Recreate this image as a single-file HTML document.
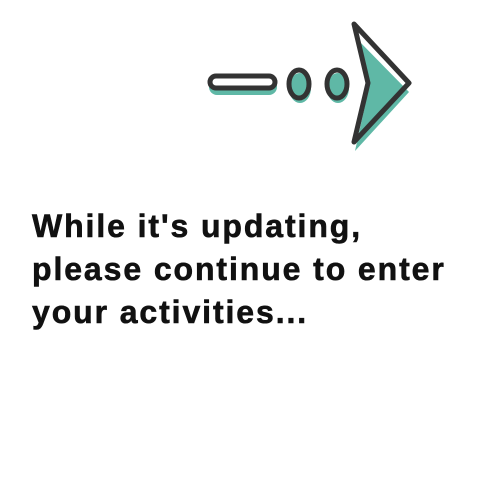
<!DOCTYPE html>
<html><head><style>
html,body{margin:0;padding:0;background:#fff;width:500px;height:500px;overflow:hidden}
.t{position:absolute;left:32px;top:205px;font-family:"Liberation Sans",sans-serif;font-weight:bold;font-size:32px;line-height:43px;color:#111;letter-spacing:1.9px;white-space:nowrap;-webkit-text-stroke:0.6px #111}
svg{position:absolute;left:0;top:0}
</style></head><body>
<svg width="500" height="500">
<g fill="#5fb8a6">
<rect x="209" y="79" width="68" height="16" rx="8"/>
<ellipse cx="300" cy="88" rx="11" ry="15"/>
<ellipse cx="338" cy="88" rx="11" ry="15"/>
<path d="M358 40 L409 92 L355 151 L368 92 Z"/>
</g>
<g fill="none" stroke="#333" stroke-width="5" stroke-linejoin="round">
<rect x="210" y="76" width="65" height="12" rx="6" fill="#fff"/>
<ellipse cx="299" cy="84" rx="10" ry="14"/>
<ellipse cx="337" cy="84" rx="10" ry="14"/>
<path d="M354 24 L409 83 L354 142 L368 83 Z"/>
</g>
</svg>
<div class="t">While it's updating,<br>please continue to enter<br>your activities...</div>
</body></html>
